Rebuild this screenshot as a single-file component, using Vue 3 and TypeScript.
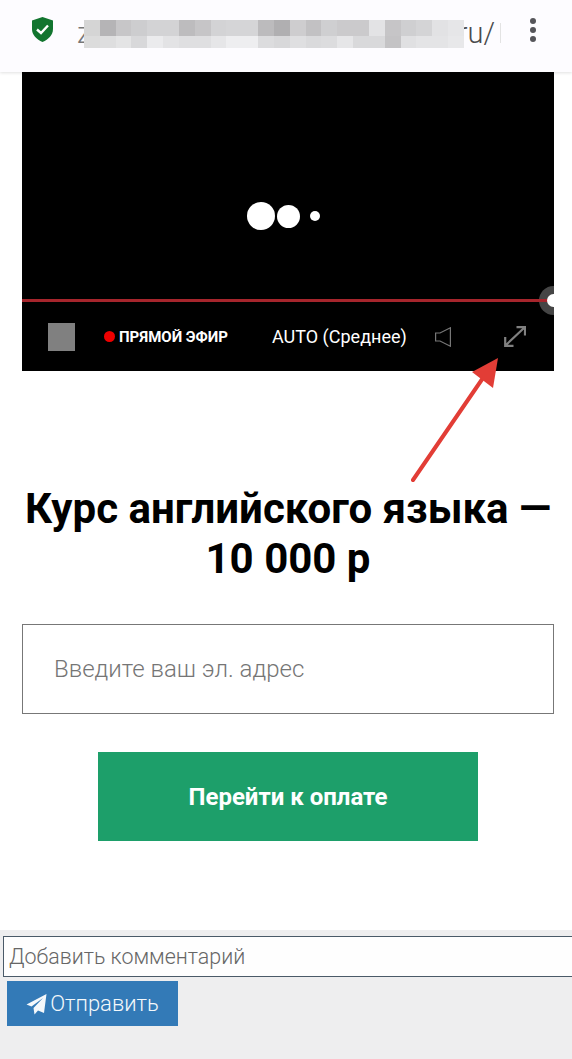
<template>
  <div class="page">
    <header class="topbar">
      <svg class="shield" width="21" height="25" viewBox="0 0 21 25">
        <path d="M10.500 0 L21 3.500 V12 C21 18 16.500 22.500 10.500 25 C4.500 22.500 0 18 0 12 V3.500 Z" fill="#12752f" />
        <path d="M5 12.500 L9 16 L16 8.500" fill="none" stroke="#fff" stroke-width="2.400" />
      </svg>
      <div class="url">
        <span class="url-start">z</span>
        <span class="url-end">ru/</span>
        <span class="url-cut"></span>
        <div class="blur">
          <div v-for="(row, r) in blurRows" :key="r" class="blur-row">
            <i v-for="(c, i) in row" :key="i" :style="{ background: c }"></i>
          </div>
        </div>
      </div>
      <div class="dots"><span></span><span></span><span></span></div>
    </header>

    <section class="player">
      <div class="screen">
        <div class="loader">
          <span class="d1"></span>
          <span class="d2"></span>
          <span class="d3"></span>
        </div>
      </div>
      <div class="progress">
        <span class="knob"></span>
        <span class="line"></span>
        <span class="core"></span>
      </div>
      <div class="controls">
        <span class="stop"></span>
        <span class="live"><i></i>ПРЯМОЙ ЭФИР</span>
        <span class="quality">AUTO (Среднее)</span>
        <svg class="sound" width="16" height="20" viewBox="0 0 16 20">
          <path d="M0.600 6 H5 L15.400 0.800 V19.200 L5 14 H0.600 Z" fill="none" stroke="#777" stroke-width="1.200" />
        </svg>
        <svg class="expand" width="22" height="21" viewBox="0 0 22 21">
          <path d="M2 19 L20 2 M12.500 1.200 H21 V9.500 M1.200 11 V19.800 H9.500" fill="none" stroke="#808080" stroke-width="2.200" />
        </svg>
      </div>
    </section>

    <main class="order">
      <h1>Курс английского языка —<br />10 000 р</h1>
      <input class="email" type="text" placeholder="Введите ваш эл. адрес" />
      <button class="pay" type="button">Перейти к оплате</button>
    </main>

    <footer class="comment">
      <input class="comment-input" type="text" placeholder="Добавить комментарий" />
      <button class="send" type="button">
        <svg width="21" height="22" viewBox="0 0 21 22">
          <path d="M20.500 1 L18 20 L12 17.500 L8.500 21.500 L7.500 15 L17 5 L5.500 13.500 L0.500 11.500 Z" fill="#f4f8fb" />
        </svg>
        Отправить
      </button>
    </footer>

    <svg class="arrow" width="100" height="125" viewBox="0 0 100 125">
      <path d="M2 123 L74 18" stroke="#e23d36" stroke-width="4" stroke-linecap="round" />
      <path d="M87 1 L61 15 L82 31 Z" fill="#e23d36" />
    </svg>
  </div>
</template>

<script setup lang="ts">
const blurRows: string[][] = [
  ['#d5d5d5', '#b5b4b6', '#c7c6c8', '#cdcdcf', '#d3d3d5', '#d3d3d5', '#bdbcbe', '#c6c5c7', '#d3d3d5', '#d5d5d7', '#d5d5d7', '#bcbbbd', '#b0afb1', '#cecdcf', '#c2c1c3', '#cfcfd1', '#cbcacc', '#cbcacc', '#e3e3e5', '#c6c5c7', '#cfcfd1', '#d4d4d6', '#e2e2e4', '#e6e6e8'],
  ['#dcdcdc', '#dededf', '#e4e4e5', '#d8d8da', '#ebebed', '#e3e3e5', '#dfdfe1', '#dfdfe1', '#e6e6e8', '#eeeef0', '#eeeef0', '#dcdcde', '#d8d8da', '#dfdfe1', '#dadadc', '#dcdcde', '#e6e6e8', '#d9d9db', '#d9d9db', '#c4c3c5', '#e0e0e2', '#e4e4e6', '#e4e4e6', '#e8e8ea']
]
</script>

<style scoped>
.page {
  position: relative;
  height: 1059px;
  overflow: hidden;
  display: flex;
  flex-direction: column;
  background: #fff;
  font-family: Roboto, "Liberation Sans", sans-serif;
}

.topbar {
  height: 72px;
  flex: none;
  display: flex;
  align-items: flex-start;
  padding: 0 0 0 32px;
  box-sizing: border-box;
  background: #fdfcff;
  box-shadow: 0 1px 3px rgba(0, 0, 0, 0.12);
  position: relative;
}
.shield {
  flex: none;
  margin-top: 17px;
}
.url {
  position: relative;
  display: flex;
  align-items: center;
  width: 424px;
  margin-left: 24px;
  margin-top: 18px;
  height: 30px;
  font-size: 29px;
  font-weight: 300;
}
.url-start {
  color: #777;
}
.url-end {
  margin-left: auto;
  color: #4a4a4c;
}
.url-cut {
  width: 1px;
  height: 20px;
  background: #e3e3e3;
  margin-left: 5px;
}
.blur {
  position: absolute;
  left: 7px;
  top: 2px;
  width: 380px;
  height: 28px;
  display: flex;
  flex-direction: column;
}
.blur-row {
  display: flex;
  flex: 16;
}
.blur-row + .blur-row {
  flex: 12;
}
.blur-row i {
  flex: 1;
}
.dots {
  margin-left: 29px;
  margin-top: 18px;
  display: flex;
  flex-direction: column;
  gap: 3px;
}
.dots span {
  width: 6px;
  height: 6px;
  border-radius: 50%;
  background: #55555a;
}

.player {
  margin: 0 18px 0 22px;
  height: 299px;
  flex: none;
  background: #000;
  display: flex;
  flex-direction: column;
}
.screen {
  height: 227px;
  display: flex;
  align-items: center;
  justify-content: center;
}
.loader {
  display: flex;
  align-items: center;
  margin: 61px 9px 0 0;
}
.loader span {
  background: #fff;
  border-radius: 50%;
}
.d1 {
  width: 28px;
  height: 28px;
}
.d2 {
  width: 23px;
  height: 23px;
  margin-left: 2px;
}
.d3 {
  width: 10px;
  height: 10px;
  margin-left: 10px;
}
.progress {
  height: 3px;
  position: relative;
}
.line {
  position: absolute;
  inset: 0;
  background: #a6252c;
}
.knob {
  position: absolute;
  right: 0;
  top: -13px;
  width: 15px;
  height: 29px;
  border-radius: 15px 0 0 15px;
  background: #454545;
}
.core {
  position: absolute;
  right: 0;
  top: -5px;
  width: 7px;
  height: 13px;
  border-radius: 7px 0 0 7px;
  background: #fff;
}
.controls {
  flex: 1;
  display: flex;
  align-items: center;
  padding: 0 0 0 26px;
  color: #fff;
}
.stop {
  width: 27px;
  height: 28px;
  background: #808080;
  flex: none;
}
.live {
  display: flex;
  align-items: center;
  margin-left: 29px;
  font-size: 15px;
  font-weight: 700;
  width: 168px;
  flex: none;
}
.live i {
  width: 11px;
  height: 11px;
  border-radius: 50%;
  background: #ee0000;
  margin-right: 4px;
}
.quality {
  font-size: 18px;
  width: 163px;
  flex: none;
}
.sound {
  flex: none;
}
.expand {
  flex: none;
  margin-left: 53px;
}

.order {
  flex: 1;
  display: flex;
  flex-direction: column;
  align-items: center;
  padding-left: 4px;
}
h1 {
  margin: 113px 0 0;
  font-size: 42px;
  line-height: 50px;
  font-weight: 700;
  color: #000;
  text-align: center;
  white-space: nowrap;
}
.email {
  margin-top: 40px;
  width: 532px;
  height: 90px;
  box-sizing: border-box;
  border: 1px solid #777;
  padding: 0 31px;
  font-family: inherit;
  font-size: 24px;
  font-weight: 300;
  outline: none;
  background: #fff;
}
.email::placeholder {
  color: #757575;
}
.pay {
  margin-top: 38px;
  width: 380px;
  height: 89px;
  border: 0;
  background: #1d9f6a;
  color: #fff;
  font-family: inherit;
  font-size: 24px;
  font-weight: 700;
}

.comment {
  height: 129px;
  flex: none;
  box-sizing: border-box;
  background: #eeeeef;
  padding: 6px 0 0 3px;
}
.comment-input {
  display: block;
  width: 580px;
  height: 41px;
  box-sizing: border-box;
  border: 1px solid #4a5a68;
  padding: 0 5px;
  font-family: inherit;
  font-size: 21.400px;
  font-weight: 300;
  background: #fefefe;
  outline: none;
}
.comment-input::placeholder {
  color: #666;
}
.send {
  margin: 4px 0 0 4px;
  width: 171px;
  height: 45px;
  border: 0;
  background: #337ab7;
  color: #f4f8fb;
  font-family: inherit;
  font-size: 22px;
  font-weight: 300;
  display: flex;
  align-items: center;
  justify-content: center;
  gap: 3px;
  padding: 0;
}

.arrow {
  position: absolute;
  left: 411px;
  top: 357px;
}
</style>
